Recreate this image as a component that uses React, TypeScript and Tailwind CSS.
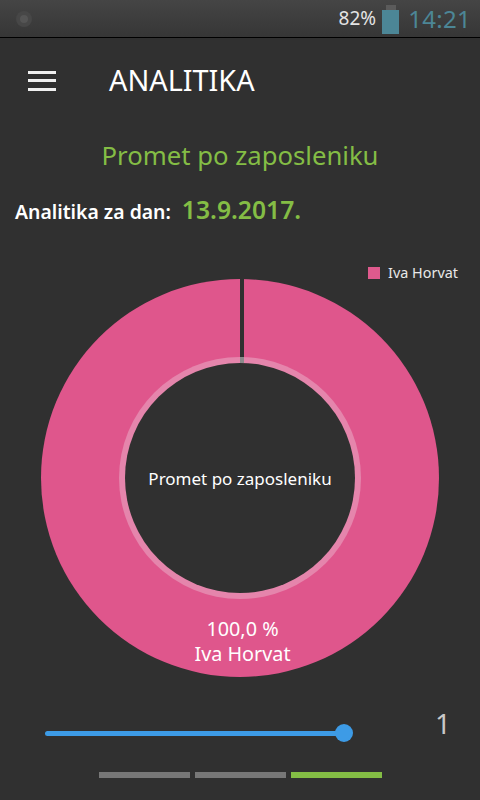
const FONT = { fontFamily: '"Noto Sans", "Open Sans", sans-serif' };

// krug: sredina (200,200) unutar svg-a od 400x400
function DonutChart() {
  return (
    <div className="relative mx-auto h-[400px] w-[400px]">
      <svg width="400" height="400" viewBox="0 0 400 400" className="block">
        <circle cx="200" cy="200" r="199" fill="#df568c" />
        <circle cx="200" cy="200" r="121" fill="#e585ac" />
        <circle cx="200" cy="200" r="115" fill="#303030" />
        <rect x="200" y="0" width="4" height="79" fill="#303030" />
        <rect x="200" y="79" width="4" height="6" fill="#8a8a8a" />
      </svg>
      <div className="absolute inset-x-0 top-[189px] text-center text-[17px] leading-[24px] text-white">
        Promet po zaposleniku
      </div>
      <div className="absolute inset-x-0 top-[338px] pl-[5px] text-center text-[19.8px] leading-[25px] text-white">
        <div>100,0 %</div>
        <div>Iva Horvat</div>
      </div>
    </div>
  );
}

export default function App() {
  return (
    <div style={FONT} className="flex h-[800px] w-[480px] flex-col overflow-hidden bg-[#303030]">
      {/* status bar */}
      <div className="flex h-[38px] shrink-0 items-center justify-between border-b-[1px] border-black bg-gradient-to-b from-[#454545] to-[#363636] pl-4 pr-[9px]">
        <div className="flex h-4 w-4 items-center justify-center rounded-full bg-[#474747]">
          <div className="h-2 w-2 rounded-full bg-[#555555]" />
        </div>
        <div className="flex items-center">
          <span className="text-[19px] leading-none text-[#e4e4e4]">82%</span>
          <div className="ml-[6px] mt-[1px] flex flex-col items-center">
            <div className="h-[5px] w-[10px] bg-[#5b5b5b]" />
            <div className="h-[24px] w-[17px] bg-[#4c8696]" />
          </div>
          <span className="ml-[9px] text-[24px] leading-none tracking-[0.3px] text-[#4c8696]">14:21</span>
        </div>
      </div>

      {/* header */}
      <div className="flex h-[85px] shrink-0 items-center pl-7">
        <div className="flex w-7 flex-col gap-[5.5px]">
          <div className="h-[3px] bg-[#f0f0f0]" />
          <div className="h-[3px] bg-[#f0f0f0]" />
          <div className="h-[3px] bg-[#f0f0f0]" />
        </div>
        <h1 className="ml-[53px] text-[28.8px] font-normal leading-none text-white">ANALITIKA</h1>
      </div>

      <div className="mt-[16px] text-center text-[25.7px] leading-[34px] text-[#84bd45]">Promet po zaposleniku</div>

      <div className="mt-[18px] flex items-baseline pl-[15px]">
        <span className="text-[19.4px] font-semibold text-white">Analitika za dan:</span>
        <span className="ml-[11px] text-[24.7px] font-semibold text-[#84bd45]">13.9.2017.</span>
      </div>

      {/* legenda */}
      <div className="mt-[35px] flex items-center justify-end pr-[22px]">
        <div className="h-3 w-3 bg-[#df5a8d]" />
        <span className="ml-2 text-[14.4px] leading-[20px] text-[#e8e8e8]">Iva Horvat</span>
      </div>

      <div className="-mt-[5px]">
        <DonutChart />
      </div>

      {/* slider */}
      <div className="relative mt-[45px] flex h-5 items-center pl-[45px]">
        <div className="h-[5px] w-[299px] rounded-l-sm bg-[#3d9be6]" />
        <div className="-ml-[9px] h-[18px] w-[18px] rounded-full bg-[#3d9be6]" />
        <span className="absolute right-[29px] top-[-17px] text-[28px] leading-[34px] text-[#c8c8c8]">1</span>
      </div>

      {/* stranice */}
      <div className="mt-[29px] flex justify-center gap-[5px]">
        <div className="h-[6px] w-[91px] bg-[#777777]" />
        <div className="h-[6px] w-[91px] bg-[#777777]" />
        <div className="h-[6px] w-[91px] bg-[#84bd45]" />
      </div>
    </div>
  );
}
